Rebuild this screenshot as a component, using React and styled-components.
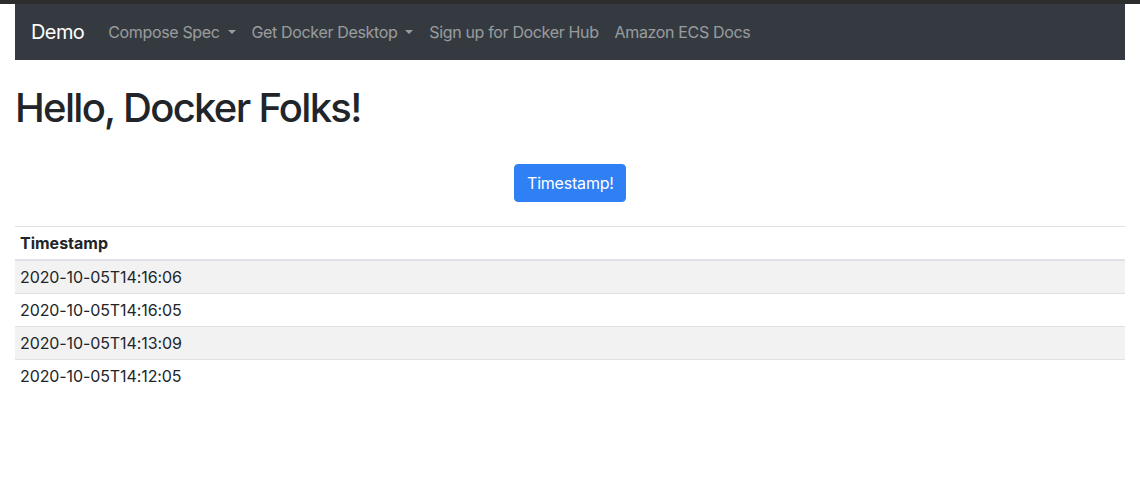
import React from "react";
import styled, { createGlobalStyle } from "styled-components";

const Global = createGlobalStyle`
  html, body { margin: 0; padding: 0; background: #fff; }
  body {
    font-family: Inter, "Liberation Sans", Arial, sans-serif;
    font-size: 16px;
    line-height: 1.5;
    color: #212529;
  }
  * { box-sizing: border-box; }
`;

const TopStrip = styled.div`
  height: 4px;
  background: #2d2d2d;
`;

const Container = styled.div`
  padding: 0 15px;
`;

const Navbar = styled.nav`
  display: flex;
  align-items: center;
  height: 56px;
  padding: 8px 16px;
  background: #343a40;
`;

const Brand = styled.a`
  font-size: 20px;
  line-height: 30px;
  letter-spacing: -0.6px;
  color: #fff;
  margin-right: 16px;
  text-decoration: none;
`;

const NavList = styled.ul`
  display: flex;
  list-style: none;
  margin: 0;
  padding: 0;
`;

const NavLink = styled.a`
  display: block;
  padding: 8px 8px;
  color: rgba(255, 255, 255, 0.5);
  letter-spacing: -0.35px;
  text-decoration: none;
  white-space: nowrap;
  ${(p) =>
    p.$dropdown &&
    `
    &::after {
      content: "";
      display: inline-block;
      margin-left: 8px;
      vertical-align: 0.255em;
      border-top: 0.3em solid;
      border-right: 0.3em solid transparent;
      border-left: 0.3em solid transparent;
      border-bottom: 0;
    }
  `}
`;

const Title = styled.h1`
  margin: 24px 0 32px;
  font-size: 40px;
  font-weight: 500;
  line-height: 48px;
  letter-spacing: -1.7px;
`;

const Center = styled.div`
  display: flex;
  justify-content: center;
  margin-bottom: 24px;
`;

const Button = styled.button`
  font-family: inherit;
  font-size: 16px;
  line-height: 24px;
  letter-spacing: -0.2px;
  padding: 6px 12px;
  width: 112px;
  color: #fff;
  background: #2f80f5;
  border: 1px solid #2f80f5;
  border-radius: 4px;
  cursor: pointer;
`;

const Table = styled.table`
  width: 100%;
  border-collapse: collapse;
`;

const Th = styled.th`
  text-align: left;
  font-weight: 700;
  padding: 4px 5px;
  line-height: 24px;
  border-top: 1px solid #dee2e6;
  border-bottom: 2px solid #dee2e6;
`;

const Row = styled.tr`
  background: ${(p) => (p.$striped ? "#f2f2f2" : "transparent")};
`;

const Td = styled.td`
  padding: 4px 5px;
  line-height: 24px;
  letter-spacing: -0.1px;
  border-top: 1px solid #dee2e6;
`;

const timestamps = [
  "2020-10-05T14:16:06",
  "2020-10-05T14:16:05",
  "2020-10-05T14:13:09",
  "2020-10-05T14:12:05",
];

export default function App() {
  return (
    <>
      <Global />
      <TopStrip />
      <Container>
        <Navbar>
          <Brand href="#">Demo</Brand>
          <NavList>
            <li><NavLink href="#" $dropdown>Compose Spec</NavLink></li>
            <li><NavLink href="#" $dropdown>Get Docker Desktop</NavLink></li>
            <li><NavLink href="#">Sign up for Docker Hub</NavLink></li>
            <li><NavLink href="#">Amazon ECS Docs</NavLink></li>
          </NavList>
        </Navbar>
        <Title>Hello, Docker Folks!</Title>
        <Center>
          <Button>Timestamp!</Button>
        </Center>
        <Table>
          <thead>
            <tr><Th>Timestamp</Th></tr>
          </thead>
          <tbody>
            {timestamps.map((t, i) => (
              <Row key={t} $striped={i % 2 === 0}>
                <Td>{t}</Td>
              </Row>
            ))}
          </tbody>
        </Table>
      </Container>
    </>
  );
}
